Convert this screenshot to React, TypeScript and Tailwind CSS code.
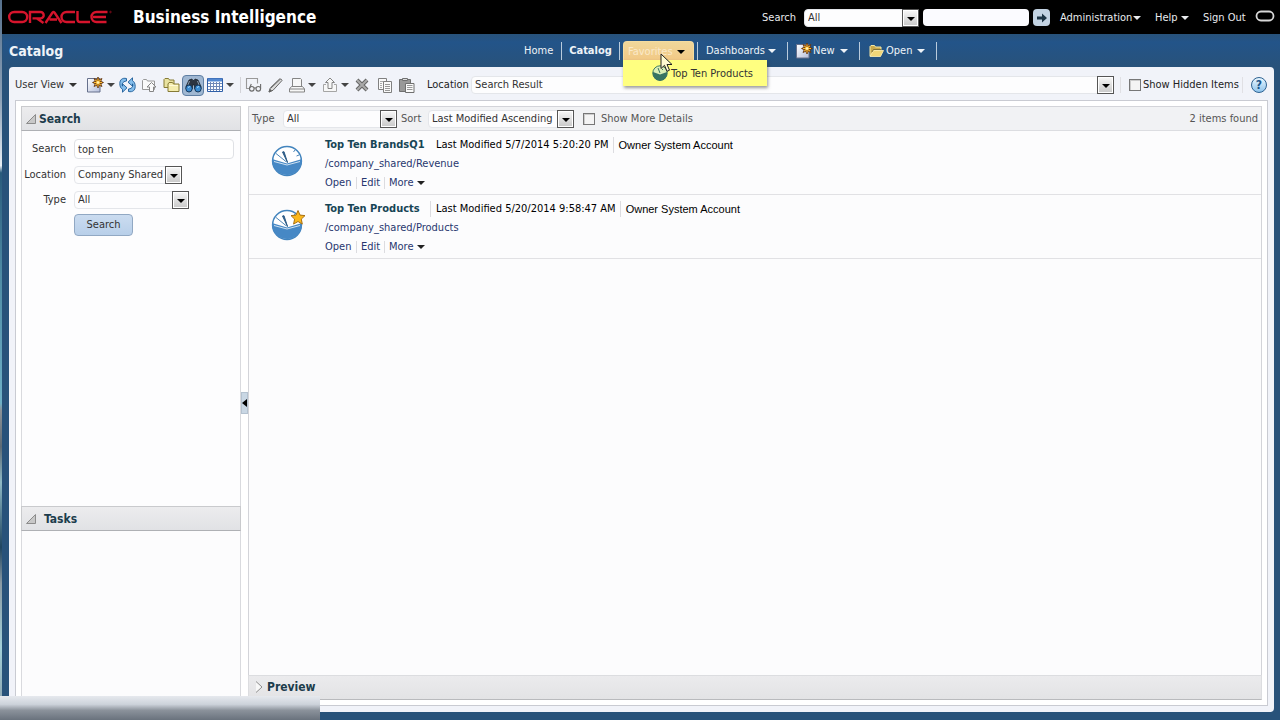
import type { ReactNode } from "react";

function Caret({ className = "" }: { className?: string }) {
  return (
    <svg viewBox="0 0 8 4" className={`h-1 w-2 shrink-0 fill-current ${className}`} aria-hidden="true">
      <path d="M0 0h8L4 4z" />
    </svg>
  );
}

function Divider({ className = "" }: { className?: string }) {
  return <span className={`w-px shrink-0 ${className}`} />;
}

function Dropdown({ label, options, className }: { label: string; options: string[]; className: string }) {
  return (
    <span className={`relative flex h-[18px] shrink-0 ${className}`}>
      <select
        aria-label={label}
        className="w-full min-w-0 appearance-none rounded-sm border border-[#e4e6ea] bg-[#fdfdfe] pr-4 pl-[3px] text-[#333] outline-none"
      >
        {options.map((o) => (
          <option key={o}>{o}</option>
        ))}
      </select>
      <span className="pointer-events-none absolute inset-y-0 right-0 flex w-[17px] items-center justify-center border border-[#555] bg-linear-to-b from-[#f8f8f8] to-[#c8c8c8] pt-[2px] text-black shadow-[inset_0_0_0_1px_#fff]">
        <Caret />
      </span>
    </span>
  );
}

function OracleLogo() {
  return (
    <svg viewBox="0 0 104 14" className="h-[14px] w-[104px]" fill="none" stroke="#d6142c" strokeWidth="2.400" aria-label="Oracle" role="img">
      <rect x="1.200" y="2" width="18" height="10" rx="5" />
      <path d="M22 13V2h10.500a3.200 3.200 0 0 1 0 6.400H24.500M29 8.400l6.500 4.600" />
      <path d="M37.500 13l7-10.500q1-1 2 0L53.500 13M41.500 9.500h7.500" />
      <path d="M67 2H58.500a5 5 0 0 0 0 10H67" />
      <path d="M69.500 1v8.500q0 2.500 2.500 2.500H82" />
      <path d="M99.500 2H88.500a5 5 0 0 0 0 10H98.500M85 7H98" />
      <circle cx="102.500" cy="2" r=".8" strokeWidth=".5" />
    </svg>
  );
}

function NewIcon() {
  return (
    <svg viewBox="0 0 17 16" className="h-4 w-[17px] shrink-0" aria-hidden="true">
      <defs>
        <linearGradient id="sheet" x1="0" y1="0" x2="1" y2="1">
          <stop offset="0" stopColor="#fff" />
          <stop offset="1" stopColor="#b4bedb" />
        </linearGradient>
      </defs>
      <path d="M.5 1.500h12.500v13.500H.5z" fill="url(#sheet)" stroke="#66708c" />
      <path d="M11 0l1.300 2.700L15 1.500l-1.200 2.700L16.500 5.500l-2.700 1.300L15 9.500l-2.700-1.200L11 11 9.700 8.300 7 9.500l1.200-2.700L5.500 5.500l2.700-1.300L7 1.500l2.700 1.200z" fill="#6b3b10" stroke="#6b3b10" strokeWidth=".8" />
      <path d="M11 1.500v8M7 5.500h8M8.300 2.800l5.400 5.400M13.700 2.800L8.300 8.200" stroke="#ffbd33" strokeWidth="1.100" />
      <circle cx="11" cy="5.500" r="1.300" fill="#fff3b0" />
    </svg>
  );
}

function RefreshIcon() {
  return (
    <svg viewBox="0 0 17 16" className="h-4 w-[17px]" fill="#84bdeb" stroke="#1b5a96" strokeWidth=".9" strokeLinejoin="round" aria-hidden="true">
      <path d="M7.500 1.500C3 .5.800 3 .8 6.500c0 3 .9 4.800 2.700 5.800v2.900l4.500-4.400-4.500-4v2.400C2.800 7.800 3 4.500 7.500 4z" />
      <path d="M9.500 14.500c4.500 1 6.700-1.500 6.700-5 0-3-.9-4.800-2.700-5.800V.8L9 5.200l4.500 4V6.800c.7 1.400.5 4.700-4 5.200z" />
    </svg>
  );
}

function UploadFolderIcon() {
  return (
    <svg viewBox="0 0 16 16" className="size-4" fill="#fafafa" stroke="#999" aria-hidden="true">
      <path d="M1.500 12.500v-9l1-1h3l1 1.500h7v8.500z" />
      <path d="M10.500 5.500l4.500 4.500h-2.500v4.500h-4V10H6z" stroke="#858585" />
    </svg>
  );
}

function FoldersIcon() {
  return (
    <svg viewBox="0 0 17 16" className="h-4 w-[17px]" stroke="#857a35" aria-hidden="true">
      <path d="M1 10.500v-8l1-1h3.500l1 1.500h4.500v7.500z" fill="#e9e3a1" />
      <path d="M5 14.500V7l1-1.500h3.500l1 1.500h5.500v7.500z" fill="#f4edae" />
      <path d="M6 8.500h9" stroke="#fffbd8" />
    </svg>
  );
}

function BinocularsIcon() {
  return (
    <svg viewBox="0 0 17 15" className="h-[15px] w-[17px]" aria-hidden="true">
      <path d="M4 2l3-1 .8 1.500h1.400L10 1l3 1 3 6.500v2.500H9.500V7h-2v4H1V8.500z" fill="#2c3440" stroke="#161c25" strokeWidth=".7" />
      <path d="M4.500 3L3 7M12.500 3L14 7" stroke="#8d9dae" />
      <ellipse cx="4" cy="10.500" rx="3.200" ry="3.500" fill="#3b8bd0" stroke="#14395f" />
      <ellipse cx="13" cy="10.500" rx="3.200" ry="3.500" fill="#3b8bd0" stroke="#14395f" />
      <path d="M3 9.500l2-1M12 9.500l2-1" stroke="#a9dcff" />
    </svg>
  );
}

function GridIcon() {
  return (
    <svg viewBox="0 0 16 14" className="h-[14px] w-4" aria-hidden="true">
      <path d="M.5.5h15v13H.5z" fill="#fff" stroke="#2f5fa8" />
      <path d="M1 2h14" stroke="#5488d0" strokeWidth="3" />
      <path d="M1 5.500h14M1 8.500h14M1 11.500h14M3.500 4v9M6.500 4v9M9.500 4v9M12.500 4v9" stroke="#7089b8" />
    </svg>
  );
}

function PreviewIcon() {
  return (
    <svg viewBox="0 0 17 16" className="h-4 w-[17px]" fill="none" stroke="#6c6c6c" strokeWidth="1.100" aria-hidden="true">
      <path d="M1.500 12V1.500h11v5M1.500 11.500h3" stroke="#999" />
      <circle cx="6.800" cy="11.800" r="2.300" />
      <circle cx="13.300" cy="11.800" r="2.300" />
      <path d="M9 11h2M4.600 11L6.300 7M15.600 11.500V7" />
    </svg>
  );
}

function PencilIcon() {
  return (
    <svg viewBox="0 0 15 15" className="size-[15px]" fill="#ddd" stroke="#666" strokeLinejoin="round" aria-hidden="true">
      <path d="M1 14l1.200-4L11.500 1q2-.5 2.500 1.500L5 12.300z" />
      <path d="M1 14l1-2.500 1.500 1.300zM3 10l9-8.500" fill="#555" />
    </svg>
  );
}

function PrintIcon() {
  return (
    <svg viewBox="0 0 16 15" className="h-[15px] w-4" fill="#f7f7f7" stroke="#858585" aria-hidden="true">
      <path d="M3.500 8.500v-8h8l1 1v7" />
      <path d="M2.500 8.500h11l2 2.500v3H.5v-3zM.5 11h15" />
    </svg>
  );
}

function ExportIcon() {
  return (
    <svg viewBox="0 0 16 16" className="size-4" fill="#f7f7f7" stroke="#858585" aria-hidden="true">
      <path d="M4 7.500H1.500v7h13v-7H12" stroke="#a5a5a5" />
      <path d="M8 1l4.500 4.500H10v6H6v-6H3.500z" />
    </svg>
  );
}

function DeleteIcon() {
  return (
    <svg viewBox="0 0 14 14" className="size-[14px]" aria-hidden="true">
      <path d="M2 2l10 10M12 2L2 12" stroke="#666" strokeWidth="4" />
      <path d="M2 2l10 10M12 2L2 12" stroke="#aaa" strokeWidth="2" />
    </svg>
  );
}

function CopyIcon() {
  return (
    <svg viewBox="0 0 16 15" className="h-[15px] w-4" fill="#fafafa" stroke="#808080" aria-hidden="true">
      <path d="M1.500.5h8v11h-8z" />
      <path d="M3 3.500h4M3 5.500h2M3 7.500h2M3 9.500h2" stroke="#aaa" />
      <path d="M6.500 3.500h8v11h-8z" />
      <path d="M8 6.500h5M8 8.500h5M8 10.500h5M8 12.500h5" stroke="#999" />
    </svg>
  );
}

function PasteIcon() {
  return (
    <svg viewBox="0 0 16 15" className="h-[15px] w-4" stroke="#707070" aria-hidden="true">
      <path d="M.5 1.500h11v12H.5z" fill="#999" />
      <path d="M3.500.5h5v2h-5z" fill="#ddd" />
      <path d="M6.500 5.500h8.500v9H6.500z" fill="#fafafa" />
      <path d="M8 7.500h5.500M8 9.500h5.500M8 11.500h5.500" stroke="#999" />
    </svg>
  );
}

function OpenFolderIcon() {
  return (
    <svg viewBox="0 0 15 12" className="h-3 w-[15px] shrink-0" aria-hidden="true">
      <path d="M1 11V1.500l1-1h3.500l1 1.500h5.500V5" fill="#c9a94c" stroke="#f6e9a4" />
      <path d="M1 11.500L4.500 5.500h10l-3 6z" fill="#f0d678" stroke="#fff3b8" strokeWidth=".8" />
      <path d="M3 7l1.500-2.500h8" fill="none" stroke="#6f6432" strokeWidth=".8" />
    </svg>
  );
}

function GaugeIcon({ starred = false }: { starred?: boolean }) {
  return (
    <svg viewBox="0 0 36 32" className="h-8 w-9" aria-hidden="true">
      <circle cx="17" cy="16" r="14.400" fill="#fff" stroke="#4284bd" strokeWidth="1.500" />
      <path d="M2 14l15 4.500L32 14a15 15 0 1 1-30 2z" fill="#4688c5" />
      <path d="M4 16.500l13 3.500 13-3.500" stroke="#cfe2f2" fill="none" />
      <path d="M17.500 17.500L12.500 7l1.500-.3z" fill="#2d5c87" stroke="#2d5c87" />
      <path d="M6 8.500L16.500 17M25 5l-1.500 2M29 10l-2.500 1" stroke="#4d86b7" />
      {starred && (
        <path d="M28 1.500l2 4.600 5 .5-3.700 3.500 1 5-4.300-2.600-4.400 2.600 1-5L21 6.600l5-.5z" fill="#fbb81c" stroke="#a87013" strokeWidth="1" />
      )}
    </svg>
  );
}

function SmallGauge() {
  return (
    <svg viewBox="0 0 16 16" className="size-4 shrink-0" aria-hidden="true">
      <circle cx="8" cy="8" r="7.200" fill="#dcefb5" stroke="#3f7d63" />
      <path d="M1 7l7 2.500L15 7a7.200 7.200 0 1 1-14 0z" fill="#387462" />
      <path d="M8 8L6 3M11 4l-1 1" stroke="#387462" />
    </svg>
  );
}

function ToolButton({ label, className, menu, children }: { label: string; className?: string; menu?: boolean; children: ReactNode }) {
  return (
    <button type="button" aria-label={label} className={`flex h-[21px] shrink-0 items-center gap-[3px] ${className ?? ""}`}>
      {children}
      {menu && <Caret />}
    </button>
  );
}

type Item = { name: string; modified: string; path: string; starred: boolean };

const items: Item[] = [
  { name: "Top Ten BrandsQ1", modified: "5/7/2014 5:20:20 PM", path: "/company_shared/Revenue", starred: false },
  { name: "Top Ten Products", modified: "5/20/2014 9:58:47 AM", path: "/company_shared/Products", starred: true },
];

function ResultRow({ item }: { item: Item }) {
  return (
    <li className="flex h-16 border-b border-[#e1e1e4]">
      <div className="flex w-[76px] shrink-0 items-center justify-center pb-1 pl-[2px]">
        <GaugeIcon starred={item.starred} />
      </div>
      <div className="flex flex-col pt-1">
        <div className="flex h-5 items-center text-black">
          <a href="#item" className="w-[105px] font-bold whitespace-nowrap text-[#174555]">{item.name}</a>
          <Divider className={item.starred ? "h-4 bg-[#dcdce0]" : "h-4"} />
          <span className="ml-[5px] whitespace-nowrap">Last Modified {item.modified}</span>
          <Divider className="ml-1 h-4 bg-[#dcdce0]" />
          <span className="ml-[5px] font-['Liberation_Sans',sans-serif] whitespace-nowrap">Owner System Account</span>
        </div>
        <a href="#folder" className="h-[18px] leading-[17px] text-[#28376f]">{item.path}</a>
        <div className="flex h-5 items-center text-[#28376f]">
          <a href="#open" className="w-[31px]">Open</a>
          <Divider className="h-3 bg-[#dcdce0]" />
          <a href="#edit" className="w-[27px] text-center">Edit</a>
          <Divider className="h-3 bg-[#dcdce0]" />
          <button type="button" className="ml-1 flex items-center gap-[3px]">
            More <Caret className="text-[#222]" />
          </button>
        </div>
      </div>
    </li>
  );
}

function PanelHeader({ title, className }: { title: string; className: string }) {
  return (
    <h2 className={`flex h-[25px] shrink-0 items-center border border-[#c9cacd] border-b-[#aeb0b4] bg-linear-to-b from-[#ececee] to-[#e1e2e5] pl-1 text-[12px] font-bold text-[#1c3c4c] ${className}`}>
      <svg viewBox="0 0 10 10" className="size-[10px]" aria-hidden="true">
        <path d="M9.500.5v9h-9z" fill="#c8c8c8" stroke="#8c8c8c" />
      </svg>
      {title}
    </h2>
  );
}

export default function App() {
  return (
    <div className="relative flex min-h-screen bg-[#28527a] font-['DejaVu_Sans_Condensed','DejaVu_Sans',sans-serif] text-[11px] leading-[14px] text-[#333]">
      <div className="w-[2px] shrink-0 bg-[linear-gradient(#56708c_0%,#8ea3b8_14%,#e8eef4_23%,#2a5b7c_24%,#4f8ba4_38%,#6fb0c6_56%,#8c9297_57%,#5d6b75_62%,#8fb9c4_67%,#1f4560_76%,#8a9aa3_81%,#a3cfd8_90%,#8fa9b4_97%)]" />
      <div className="flex min-w-0 grow flex-col pl-px">
        <header className="-ml-px flex h-[34px] shrink-0 items-center bg-black pr-[5px] pl-[6px] text-[#e9ebee]">
          <OracleLogo />
          <h1 className="ml-[21px] text-[17px] leading-5 font-bold whitespace-nowrap text-white">Business Intelligence</h1>
          <div className="ml-auto flex items-center pt-px">
            <span className="w-[42px]">Search</span>
            <Dropdown label="Search in" options={["All"]} className="w-[115px]" />
            <input aria-label="Search text" className="ml-1 h-[17px] w-[106px] rounded-sm bg-[#fbfbff] px-1 text-[#333] outline-none" />
            <button type="button" aria-label="Go" className="ml-1 flex h-[17px] w-[17px] items-center justify-center rounded-sm bg-[#c3d3e3]">
              <svg viewBox="0 0 10 10" className="size-[10px]" aria-hidden="true">
                <path d="M0 3.500h5V.500L10 5 5 9.500v-3H0z" fill="#1d3445" />
              </svg>
            </button>
            <button type="button" className="ml-[10px] flex w-[81px] items-center justify-between">Administration <Caret /></button>
            <button type="button" className="ml-[14px] flex w-[34px] items-center justify-between">Help <Caret /></button>
            <a href="#signout" className="ml-[14px] w-[44px] whitespace-nowrap">Sign Out</a>
            <svg viewBox="0 0 20 12" className="mb-1 ml-2 h-3 w-5" aria-hidden="true">
              <rect x="1.500" y="1.500" width="17" height="9" rx="4.500" fill="none" stroke="#d8d8d8" strokeWidth="1.800" />
            </svg>
          </div>
        </header>

        <div className="flex h-[33px] shrink-0 items-center bg-linear-to-b from-[#28527a] via-[#235489] via-25% to-[#28527a] pr-[343px] pl-[6px] text-[#eef3f8]">
          <h2 className="text-[14px] font-bold">Catalog</h2>
          <nav className="ml-auto flex items-center pt-px">
            <a href="#home" className="w-[37px]">Home</a>
            <Divider className="h-[18px] bg-[#b9cbdc]" />
            <a href="#catalog" className="w-[57px] text-center font-bold">Catalog</a>
            <Divider className="h-[18px] bg-[#b9cbdc]" />
            <div className="relative mx-[3px]">
              <button type="button" className="flex h-5 w-[71px] items-center justify-between rounded-t-sm border border-b-0 border-[#f4dca0] bg-linear-to-b from-[#f0d79a] to-[#f2c884] pr-2 pl-1 text-[#fbe9c8]">
                Favorites <Caret className="text-black" />
              </button>
              <div className="absolute top-[19px] left-0 z-10 flex h-[26px] w-[144px] items-center bg-[#ffff80] pl-[29px] text-[#333] shadow-[1px_2px_3px_rgba(60,60,60,0.5)]">
                <SmallGauge />
                <a href="#favorite" className="ml-[3px] pt-px whitespace-nowrap">Top Ten Products</a>
              </div>
              <svg viewBox="0 0 13 20" className="absolute top-[12px] left-[37px] z-20 h-5 w-[13px]" aria-hidden="true">
                <path d="M1 1v14.500l3.500-3.200 2.500 6 2.500-1.100-2.500-5.700H12z" fill="#fffbd0" stroke="#222" />
              </svg>
            </div>
            <Divider className="h-[18px] bg-[#b9cbdc]" />
            <button type="button" className="flex w-[89px] items-center justify-between pr-[11px] pl-2">Dashboards <Caret /></button>
            <Divider className="h-[18px] bg-[#b9cbdc]" />
            <button type="button" className="flex w-[71px] items-center pl-2"><NewIcon />New <Caret className="mr-[11px] ml-auto" /></button>
            <Divider className="h-[18px] bg-[#b9cbdc]" />
            <button type="button" className="flex w-[76px] items-center pl-[9px]"><OpenFolderIcon /><span className="ml-[2px]">Open</span><Caret className="mr-[11px] ml-auto" /></button>
            <Divider className="h-[18px] bg-[#b9cbdc]" />
          </nav>
        </div>

        <main className="mr-[6px] mb-2 ml-[6px] flex grow flex-col rounded bg-[#f1f3f9] px-[6px] pb-[6px]">
          <div className="flex h-[33px] shrink-0 items-center pt-[3px] text-[#444]">
            <button type="button" className="flex w-[62px] items-center justify-between whitespace-nowrap text-[#333]">User View <Caret /></button>
            <ToolButton label="New" menu className="ml-[10px]"><NewIcon /></ToolButton>
            <ToolButton label="Refresh" className="ml-1"><RefreshIcon /></ToolButton>
            <ToolButton label="Up" className="ml-[5px]"><UploadFolderIcon /></ToolButton>
            <ToolButton label="New folder" className="ml-[6px]"><FoldersIcon /></ToolButton>
            <ToolButton label="Search" className="ml-[2px] w-[22px] justify-center rounded-sm border border-[#5f7fa3] bg-[#9fb7d2]"><BinocularsIcon /></ToolButton>
            <ToolButton label="List view" menu className="ml-[3px]"><GridIcon /></ToolButton>
            <Divider className="ml-[6px] h-4 bg-[#d3d3d8]" />
            <ToolButton label="Preview" className="ml-1"><PreviewIcon /></ToolButton>
            <ToolButton label="Edit" className="ml-[6px]"><PencilIcon /></ToolButton>
            <ToolButton label="Print" menu className="ml-[6px]"><PrintIcon /></ToolButton>
            <ToolButton label="Export" menu className="ml-[6px]"><ExportIcon /></ToolButton>
            <ToolButton label="Delete" className="ml-[6px]"><DeleteIcon /></ToolButton>
            <ToolButton label="Copy" className="ml-2"><CopyIcon /></ToolButton>
            <ToolButton label="Paste" className="ml-[6px]"><PasteIcon /></ToolButton>
            <span className="ml-3 w-[44px] text-[#222]">Location</span>
            <Dropdown label="Location" options={["Search Result"]} className="min-w-0 shrink grow" />
            <Divider className="ml-[6px] h-4 bg-[#e0e0e4]" />
            <label className="ml-2 flex w-[113px] items-center gap-[2px] whitespace-nowrap text-[#222]">
              <input type="checkbox" className="size-3 shrink-0 appearance-none border border-[#777] bg-[#f4f4f4] shadow-[inset_1px_1px_0_#ccc]" />
              Show Hidden Items
            </label>
            <Divider className="h-4 bg-[#e0e0e4]" />
            <button type="button" aria-label="Help" className="mr-px ml-2 flex size-4 shrink-0 items-center justify-center rounded-full border border-[#2d6292] bg-linear-to-b from-[#e8f6ff] to-[#8fc4ec] text-[12px] font-bold text-[#1c568c]">?</button>
          </div>

          <div className="flex grow border border-[#c9cbd2] bg-white p-[5px]">
            <aside className="flex w-[220px] shrink-0 flex-col">
              <section className="flex h-[400px] flex-col">
                <PanelHeader title="Search" className="gap-[3px]" />
                <form className="grow border-x border-[#d9dade] bg-[#fdfdfe] pt-2" onSubmit={(e) => e.preventDefault()}>
                  <div className="flex h-[25px] items-center pb-[5px]">
                    <label htmlFor="q" className="mr-2 w-[44px] text-right">Search</label>
                    <input id="q" defaultValue="top ten" className="h-5 w-[160px] rounded-sm border border-[#dfe1e5] bg-white px-[3px] outline-none" />
                  </div>
                  <div className="flex h-[25px] items-center pb-[3px]">
                    <span className="mr-2 w-[44px] text-right">Location</span>
                    <Dropdown label="Search location" options={["Company Shared"]} className="w-[108px]" />
                  </div>
                  <div className="flex h-[25px] items-center pb-[3px]">
                    <span className="mr-2 w-[44px] text-right">Type</span>
                    <Dropdown label="Type" options={["All"]} className="w-[115px]" />
                  </div>
                  <button type="submit" className="ml-[52px] block h-[22px] w-[59px] rounded-sm border border-[#91a8c3] bg-linear-to-b from-[#cbdcf0] to-[#b8cfe9]">Search</button>
                </form>
              </section>
              <section className="flex grow flex-col">
                <PanelHeader title="Tasks" className="gap-2" />
                <div className="grow border-x border-[#d9dade] bg-[#fcfcfd]" />
              </section>
            </aside>

            <div className="flex w-[7px] shrink-0 items-center justify-center">
              <button type="button" aria-label="Collapse panel" className="flex h-[22px] w-[7px] items-center justify-center border border-[#b4c2d0] bg-[#c9d7e4]">
                <svg viewBox="0 0 5 8" className="h-2 w-[5px] shrink-0" aria-hidden="true"><path d="M5 0v8L0 4z" /></svg>
              </button>
            </div>

            <section className="flex min-w-0 grow flex-col border border-b-0 border-[#d3d4d9] bg-[#fcfcfd]">
              <div className="flex h-6 shrink-0 items-center border-b border-[#dcdde1] bg-[#f1f2f4] px-[3px] text-[#555]">
                <span className="w-[31px]">Type</span>
                <Dropdown label="Type filter" options={["All"]} className="w-[114px]" />
                <span className="ml-1 w-[27px]">Sort</span>
                <Dropdown label="Sort" options={["Last Modified Ascending"]} className="w-[146px]" />
                <label className="ml-[9px] flex items-center gap-[6px] whitespace-nowrap">
                  <input type="checkbox" className="size-3 shrink-0 appearance-none border border-[#777] bg-[#f4f4f4] shadow-[inset_1px_1px_0_#ccc]" />
                  Show More Details
                </label>
                <span className="ml-auto">2 items found</span>
              </div>
              <ul className="grow">
                {items.map((item) => (
                  <ResultRow key={item.name} item={item} />
                ))}
              </ul>
              <h2 className="-mx-px flex h-[25px] shrink-0 items-center border border-[#dcdde0] border-b-[#b9babd] bg-linear-to-b from-[#ebebed] to-[#e3e3e5] pb-[2px] pl-[6px] text-[12px] font-bold text-[#1c3c4c]">
                <svg viewBox="0 0 8 12" className="mr-1 h-3 w-2" fill="#f8f8f8" stroke="#8c8c8c" aria-hidden="true">
                  <path d="M1 .5l6 5.500-6 5.500" />
                </svg>
                Preview
              </h2>
            </section>
          </div>
        </main>
      </div>

      <div className="absolute bottom-0 left-0 h-6 w-[320px] bg-[linear-gradient(#e6e9ee_0%,#ccd2da_35%,#8b929b_60%,#69727d_100%)]" />
    </div>
  );
}
